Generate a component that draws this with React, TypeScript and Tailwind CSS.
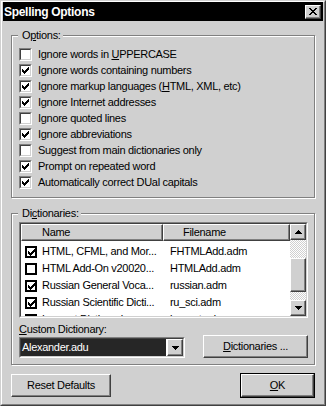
import React from "react";

function CheckGlyph() {
  return (
    <svg width="7" height="7" viewBox="0 0 7 7" shapeRendering="crispEdges" fill="#000">
      <rect x="6" y="0" width="1" height="1" />
      <rect x="5" y="1" width="2" height="1" />
      <rect x="0" y="2" width="1" height="1" />
      <rect x="4" y="2" width="3" height="1" />
      <rect x="0" y="3" width="2" height="1" />
      <rect x="3" y="3" width="3" height="1" />
      <rect x="0" y="4" width="5" height="1" />
      <rect x="1" y="5" width="3" height="1" />
      <rect x="2" y="6" width="1" height="1" />
    </svg>
  );
}

function Arrow({ up }: { up?: boolean }) {
  return (
    <svg width="7" height="4" viewBox="0 0 7 4" shapeRendering="crispEdges" fill="#000">
      <rect x="0" y={up ? 3 : 0} width="7" height="1" />
      <rect x="1" y={up ? 2 : 1} width="5" height="1" />
      <rect x="2" y={up ? 1 : 2} width="3" height="1" />
      <rect x="3" y={up ? 0 : 3} width="1" height="1" />
    </svg>
  );
}

function CloseGlyph() {
  return (
    <svg width="8" height="7" viewBox="0 0 8 7" shapeRendering="crispEdges" fill="#000">
      <rect x="0" y="0" width="2" height="1" />
      <rect x="6" y="0" width="2" height="1" />
      <rect x="1" y="1" width="2" height="1" />
      <rect x="5" y="1" width="2" height="1" />
      <rect x="2" y="2" width="4" height="1" />
      <rect x="3" y="3" width="2" height="1" />
      <rect x="2" y="4" width="4" height="1" />
      <rect x="1" y="5" width="2" height="1" />
      <rect x="5" y="5" width="2" height="1" />
      <rect x="0" y="6" width="2" height="1" />
      <rect x="6" y="6" width="2" height="1" />
    </svg>
  );
}

// sunken 3d checkbox used in the options group
function Box3D({ checked }: { checked: boolean }) {
  return (
    <span className="mt-px flex h-[13px] w-[13px] shrink-0 border border-t-[#808080] border-l-[#808080] border-r-white border-b-white">
      <span className="flex h-full w-full items-center justify-center border border-t-[#404040] border-l-[#404040] border-r-[#d0d0d0] border-b-[#d0d0d0] bg-white">
        {checked && <CheckGlyph />}
      </span>
    </span>
  );
}

// flat checkbox used in the list
function FlatBox({ checked }: { checked: boolean }) {
  return (
    <span className="mt-[3px] ml-[4px] flex h-[12px] w-[12px] shrink-0 border-2 border-black bg-white pl-px pt-px">
      {checked && <CheckGlyph />}
    </span>
  );
}

const options: { label: React.ReactNode; checked: boolean }[] = [
  { label: <>Ignore words in <u>U</u>PPERCASE</>, checked: false },
  { label: "Ignore words containing numbers", checked: true },
  { label: <>Ignore markup languages (<u>H</u>TML, XML, etc)</>, checked: true },
  { label: "Ignore Internet addresses", checked: true },
  { label: "Ignore quoted lines", checked: false },
  { label: "Ignore abbreviations", checked: true },
  { label: "Suggest from main dictionaries only", checked: false },
  { label: "Prompt on repeated word", checked: true },
  { label: "Automatically correct DUal capitals", checked: true },
];

const dicts = [
  { name: "HTML, CFML, and Mor...", file: "FHTMLAdd.adm", checked: true },
  { name: "HTML Add-On v20020...", file: "HTMLAdd.adm", checked: false },
  { name: "Russian General Voca...", file: "russian.adm", checked: true },
  { name: "Russian Scientific Dicti...", file: "ru_sci.adm", checked: true },
  { name: "Lernout Dictionaries", file: "lernout.adm", checked: true },
];

export default function App() {
  return (
    <div className="h-[406px] w-[326px] border border-t-[#d0d0d0] border-l-[#d0d0d0] border-r-[#404040] border-b-[#404040] bg-[#d0d0d0] font-['Liberation_Sans',Arial,sans-serif] text-[11px] tracking-[-0.3px] text-black">
      <div className="flex h-full flex-col border border-t-white border-l-white border-r-[#808080] border-b-[#808080] px-px">
        {/* title bar */}
        <div className="flex h-[19px] shrink-0 items-center justify-between bg-black pl-px pr-[2px]">
          <span className="text-[12px] font-bold text-white">Spelling Options</span>
          <span className="flex h-[14px] w-[16px] items-center justify-center border border-t-white border-l-white border-r-[#404040] border-b-[#404040] bg-[#d0d0d0] shadow-[inset_-1px_-1px_0_#808080]">
            <CloseGlyph />
          </span>
        </div>

        <div className="flex flex-col px-[8px]">
          {/* options group */}
          <div className="mt-[14px] border border-[#808080] pb-[6px] pl-[7px] pr-[6px] shadow-[inset_1px_1px_0_#fff,1px_1px_0_#fff]">
            <div className="-mt-[7px] -ml-px w-fit bg-[#d0d0d0] pl-[4px] pr-[2px] leading-[13px]">
              O<u>p</u>tions:
            </div>
            <div className="mt-[5px] flex flex-col">
              {options.map((o, i) => (
                <div key={i} className="flex h-[16px] items-start gap-[6px]">
                  <Box3D checked={o.checked} />
                  <span className="leading-[15px]">{o.label}</span>
                </div>
              ))}
            </div>
          </div>

          {/* dictionaries group */}
          <div className="mt-[15px] border border-[#808080] pb-[6px] pl-[7px] pr-[6px] shadow-[inset_1px_1px_0_#fff,1px_1px_0_#fff]">
            <div className="-mt-[7px] -ml-px w-fit bg-[#d0d0d0] pl-[4px] pr-[2px] leading-[13px]">
              Di<u>c</u>tionaries:
            </div>

            {/* list view */}
            <div className="mt-[2px] h-[96px] border border-t-[#808080] border-l-[#808080] border-r-white border-b-white">
              <div className="flex h-full border border-t-[#404040] border-l-[#404040] border-r-[#d0d0d0] border-b-[#d0d0d0] bg-white">
                <div className="flex flex-1 flex-col overflow-hidden">
                  <div className="flex h-[17px] shrink-0">
                    <div className="flex w-[142px] items-center border border-t-white border-l-white border-r-[#404040] border-b-[#404040] bg-[#d0d0d0] pl-[20px] shadow-[inset_-1px_-1px_0_#808080]">
                      Name
                    </div>
                    <div className="flex flex-1 items-center border border-t-white border-l-white border-r-[#404040] border-b-[#404040] bg-[#d0d0d0] pl-[19px] shadow-[inset_-1px_-1px_0_#808080]">
                      Filename
                    </div>
                  </div>
                  <div className="flex flex-col pt-[2px]">
                    {dicts.map((d, i) => (
                      <div key={i} className="flex h-[17px] shrink-0 items-start">
                        <FlatBox checked={d.checked} />
                        <span className="ml-[5px] w-[121px] whitespace-nowrap leading-[17px]">{d.name}</span>
                        <span className="ml-[7px] whitespace-nowrap leading-[17px]">{d.file}</span>
                      </div>
                    ))}
                  </div>
                </div>

                {/* scrollbar */}
                <div className="flex w-[16px] shrink-0 flex-col">
                  <div className="flex h-[16px] items-center justify-center border border-t-white border-l-white border-r-[#404040] border-b-[#404040] bg-[#d0d0d0] shadow-[inset_-1px_-1px_0_#808080]">
                    <Arrow up />
                  </div>
                  <div className="h-[18px] bg-[image:repeating-conic-gradient(#fff_0_25%,#d0d0d0_0_50%)] bg-[length:2px_2px]" />
                  <div className="h-[34px] border border-t-white border-l-white border-r-[#404040] border-b-[#404040] bg-[#d0d0d0] shadow-[inset_-1px_-1px_0_#808080]" />
                  <div className="h-[8px] bg-[image:repeating-conic-gradient(#fff_0_25%,#d0d0d0_0_50%)] bg-[length:2px_2px]" />
                  <div className="flex h-[16px] items-center justify-center border border-t-white border-l-white border-r-[#404040] border-b-[#404040] bg-[#d0d0d0] shadow-[inset_-1px_-1px_0_#808080]">
                    <Arrow />
                  </div>
                </div>
              </div>
            </div>

            <div className="flex items-end justify-between">
              <div className="flex flex-col">
                <div className="mt-[5px] leading-[13px]">
                  <u>C</u>ustom Dictionary:
                </div>
                <div className="mt-px flex h-[21px] w-[166px] border border-t-[#808080] border-l-[#808080] border-r-white border-b-white">
                  <div className="flex flex-1 border border-t-[#404040] border-l-[#404040] border-r-[#d0d0d0] border-b-[#d0d0d0] bg-white">
                    <div className="mr-px flex-1 bg-[#262626] pl-px leading-[17px] text-white">Alexander.adu</div>
                    <div className="flex w-[16px] items-center justify-center border border-t-white border-l-white border-r-[#404040] border-b-[#404040] bg-[#d0d0d0] shadow-[inset_-1px_-1px_0_#808080]">
                      <Arrow />
                    </div>
                  </div>
                </div>
              </div>
              <div className="flex h-[23px] w-[105px] items-center justify-center border border-t-white border-l-white border-r-[#404040] border-b-[#404040] shadow-[inset_-1px_-1px_0_#808080]">
                <span>
                  <u>D</u>ictionaries ...
                </span>
              </div>
            </div>
          </div>

          {/* bottom buttons */}
          <div className="mt-[8px] flex items-center justify-between">
            <div className="flex h-[23px] w-[100px] items-center justify-center border border-t-white border-l-white border-r-[#404040] border-b-[#404040] shadow-[inset_-1px_-1px_0_#808080]">
              Reset Defaults
            </div>
            <div className="h-[25px] w-[75px] border border-black">
              <div className="flex h-full items-center justify-center border border-t-white border-l-white border-r-[#404040] border-b-[#404040] shadow-[inset_-1px_-1px_0_#808080]">
                <span>
                  <u>O</u>K
                </span>
              </div>
            </div>
          </div>
        </div>
      </div>
    </div>
  );
}
